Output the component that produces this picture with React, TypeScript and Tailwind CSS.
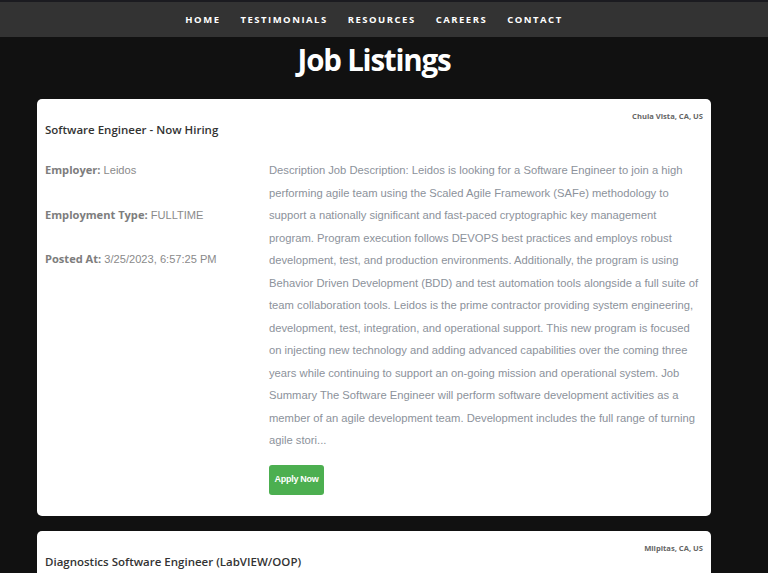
import React from "react";

const desc =
  "Description Job Description: Leidos is looking for a Software Engineer to join a high performing agile team using the Scaled Agile Framework (SAFe) methodology to support a nationally significant and fast-paced cryptographic key management program. Program execution follows DEVOPS best practices and employs robust development, test, and production environments. Additionally, the program is using Behavior Driven Development (BDD) and test automation tools alongside a full suite of team collaboration tools. Leidos is the prime contractor providing system engineering, development, test, integration, and operational support. This new program is focused on injecting new technology and adding advanced capabilities over the coming three years while continuing to support an on-going mission and operational system. Job Summary The Software Engineer will perform software development activities as a member of an agile development team. Development includes the full range of turning agile stori...";

function Card({
  title,
  location,
  employer,
  type,
  posted,
  description,
}: {
  title: string;
  location: string;
  employer?: string;
  type?: string;
  posted?: string;
  description?: string;
}) {
  return (
    <div className="mx-[37px] bg-white rounded-[5px] px-[8px] pt-[10px] pb-[21px]">
      <div className="flex justify-end text-[7.6px] font-bold text-[#666] leading-[14px] font-['Open_Sans']">
        {location}
      </div>
      <h2 className="text-[11.5px] font-semibold text-[#333] leading-[14px] font-['Open_Sans']">
        {title}
      </h2>
      {description && (
        <div className="flex mt-[22px]">
          <div className="w-[224px] shrink-0 text-[11.1px] leading-[22.5px] text-[#8a8a8a] font-['Liberation_Sans']">
            <p className="mb-[22px]">
              <span className="font-['Open_Sans'] font-bold text-[#7d7d7d]">Employer:</span> {employer}
            </p>
            <p className="mb-[22px]">
              <span className="font-['Open_Sans'] font-bold text-[#7d7d7d]">Employment Type:</span> {type}
            </p>
            <p>
              <span className="font-['Open_Sans'] font-bold text-[#7d7d7d]">Posted At:</span> {posted}
            </p>
          </div>
          <div className="w-[434px]">
            <p className="text-[11.22px] leading-[22.5px] text-[#8c929b] font-['Liberation_Sans']">
              {description}
            </p>
            <button className="mt-[13px] w-[55px] h-[30px] rounded-[3px] bg-[#4caf50] text-white text-[9px] font-bold font-['Liberation_Sans'] tracking-[-0.3px]">
              Apply Now
            </button>
          </div>
        </div>
      )}
    </div>
  );
}

export default function App() {
  return (
    <div className="min-h-screen bg-[#111111] font-['Open_Sans',sans-serif] overflow-hidden h-[573px]">
      <nav className="h-[37px] bg-[#333333] border-t-2 border-[#1b1b20] flex items-center pt-[1px]">
        <div className="w-[748px] flex items-center justify-center gap-[20px] text-white text-[9.5px] font-bold tracking-[1.5px]">
          <a>HOME</a>
          <a>TESTIMONIALS</a>
          <a>RESOURCES</a>
          <a>CAREERS</a>
          <a>CONTACT</a>
        </div>
      </nav>
      <div className="w-[748px]">
        <h1 className="text-center text-white text-[29.5px] font-bold leading-[46px] mb-[16px] tracking-[-1.2px]">
          Job Listings
        </h1>
        <div className="flex flex-col gap-[15px]">
          <Card
            title="Software Engineer - Now Hiring"
            location="Chula Vista, CA, US"
            employer="Leidos"
            type="FULLTIME"
            posted="3/25/2023, 6:57:25 PM"
            description={desc}
          />
          <Card title="Diagnostics Software Engineer (LabVIEW/OOP)" location="Milpitas, CA, US" />
        </div>
      </div>
    </div>
  );
}
